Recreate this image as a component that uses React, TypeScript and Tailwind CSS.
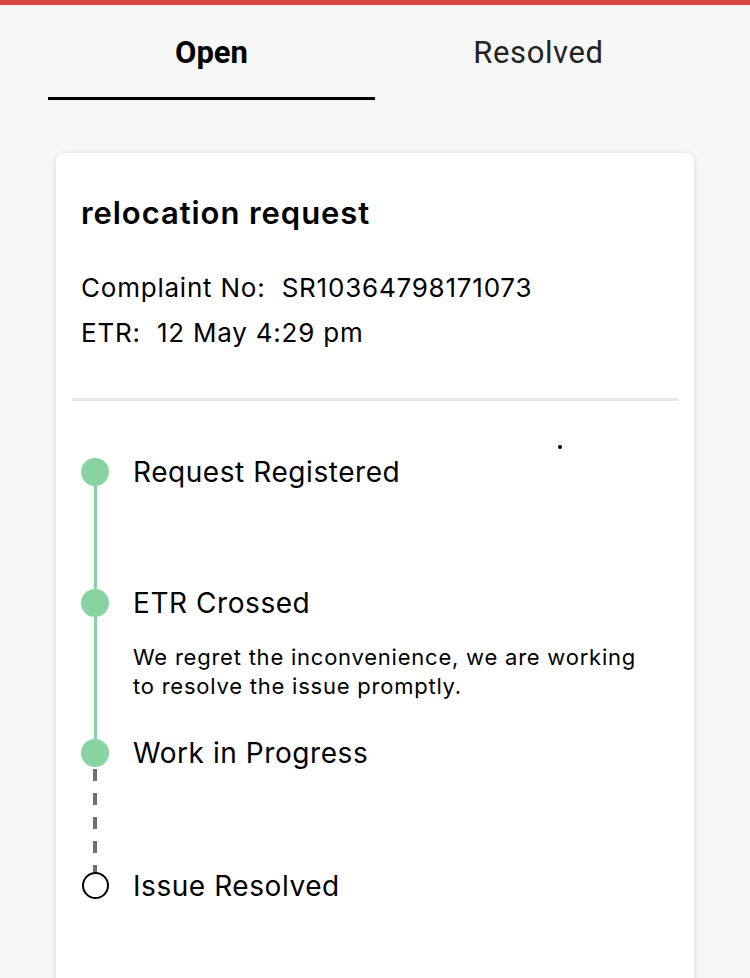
import React from 'react';

const steps = [
  { title: 'Request Registered', height: 131, done: true, line: 'solid' as const },
  {
    title: 'ETR Crossed',
    height: 150,
    done: true,
    line: 'solid' as const,
    note: 'We regret the inconvenience, we are working to resolve the issue promptly.',
  },
  { title: 'Work in Progress', height: 133, done: true, line: 'dashed' as const },
  { title: 'Issue Resolved', height: 60, done: false, line: null },
];

export default function App() {
  return (
    <div className="h-[978px] bg-[#f7f7f7] overflow-hidden" style={{ fontFamily: 'Roboto, "Liberation Sans", sans-serif' }}>
      <div className="h-[5px] bg-[#d94646]" />

      {/* tabs */}
      <div className="mx-[48px] flex">
        <div className="flex-1 h-[95px] border-b-[3px] border-black pt-[30px] text-center text-[31px] leading-[36px] font-bold text-black">
          Open
        </div>
        <div className="flex-1 h-[95px] pt-[30px] text-center text-[31px] leading-[36px] text-[#222] tracking-[0.02em]">
          Resolved
        </div>
      </div>

      {/* card */}
      <div
        className="relative mx-[56px] mt-[53px] bg-white rounded-lg shadow-[0_1px_6px_rgba(0,0,0,0.12)] pb-24"
        style={{ fontFamily: 'Inter, "Noto Sans", sans-serif' }}
      >
        <div className="px-[25px] pt-[42px]">
          <h2 className="text-[31px] leading-[36px] font-semibold tracking-[0.03em] text-black">relocation request</h2>
          <div className="mt-[34px] text-[26px] leading-[45px] tracking-[0.03em] text-black">
            <p>Complaint No:&nbsp; SR10364798171073</p>
            <p>ETR:&nbsp; 12 May 4:29 pm</p>
          </div>
        </div>

        <div className="mx-[16px] mt-[43px] h-[3px] bg-[#e6e6e6]" />

        <span className="absolute left-[502px] top-[292px] w-[4px] h-[4px] rounded-full bg-black" />

        <div className="pt-[57px] pl-[25px]">
          {steps.map((s) => (
            <div key={s.title} className="flex" style={{ height: s.height }}>
              <div className="w-[28px] flex flex-col items-center">
                {s.done ? (
                  <div className="w-[28px] h-[28px] rounded-full bg-[#88d4a1] shrink-0" />
                ) : (
                  <div className="w-[27px] h-[27px] rounded-full border-2 border-black bg-white shrink-0" />
                )}
                {s.line === 'solid' && <div className="w-[3px] flex-1 bg-[#88d4a1]" />}
                {s.line === 'dashed' && (
                  <svg width="4" className="flex-1" preserveAspectRatio="none">
                    <line x1="2" y1="2" x2="2" y2="200" stroke="#6f6f6f" strokeWidth="4" strokeDasharray="12 12" />
                  </svg>
                )}
              </div>
              <div className="pl-[24px]">
                <p className="text-[28px] leading-[28px] tracking-[0.02em] text-black">{s.title}</p>
                {s.note && (
                  <p className="mt-[26px] w-[515px] text-[22px] leading-[29px] tracking-[0.035em] text-black">{s.note}</p>
                )}
              </div>
            </div>
          ))}
        </div>
      </div>
    </div>
  );
}
